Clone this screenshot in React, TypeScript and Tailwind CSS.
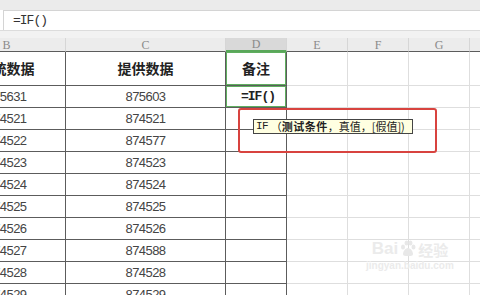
import React from 'react';

const colB = ['875631', '874521', '874522', '874523', '874524', '874525', '874526', '874527', '874528', '874529'];
const colC = ['875603', '874521', '874577', '874523', '874524', '874525', '874526', '874588', '874528', '874529'];

const dark = 'border-r border-b border-[#5c5c5c]';
const light = 'border-r border-b border-[#dedede]';
const num = "flex items-center justify-center text-[13px] tracking-[-0.6px] text-[#444] font-['Liberation_Sans',sans-serif]";
const cjk = "font-['Noto_Sans_CJK_SC','Noto_Sans',sans-serif]";

const App: React.FC = () => {
  const letters = ['B', 'C', 'D', 'E', 'F', 'G', ''];

  return (
    <div className="relative w-[480px] h-[295px] overflow-hidden bg-white">
      {/* toolbar strip */}
      <div className="h-[10px] bg-[#ebebeb]" />

      {/* formula bar */}
      <div className="h-[20px] ml-[3px] flex items-center bg-white border-t border-l border-[#d4d4d4] pl-[9px]">
        <span className="text-[13px] text-[#333] font-['Liberation_Mono',monospace] tracking-[-1px]">=IF()</span>
      </div>
      <div className="h-[8px] bg-[#f2f2f2] border-t border-[#dcdcdc]" />

      {/* sheet */}
      <div className="ml-[-52px] grid grid-cols-[118px_160px_61px_61px_61px_61px_100px]">
        {/* column letters */}
        {letters.map((l) => (
          <div
            key={l || 'h'}
            className={`h-[14px] flex items-center justify-center text-[12px] text-[#8a8a8a] font-['Liberation_Serif',serif] border-r border-[#d6d6d6] ${
              l === 'D' ? 'bg-[#d9d9d9] border-b-2 border-b-[#5aa75a] text-[#6a9f6a]' : 'bg-[#ececec] border-b border-b-[#5c5c5c]'
            }`}
          >
            {l}
          </div>
        ))}

        {/* header row */}
        <div className={`h-[34px] ${dark} flex items-center justify-center text-[14px] font-bold text-[#222] ${cjk}`}>系统数据</div>
        <div className={`h-[34px] ${dark} flex items-center justify-center text-[14px] font-bold text-[#222] ${cjk}`}>提供数据</div>
        <div className={`h-[34px] ${dark} shadow-[inset_0_0_0_1px_#5fae5f] flex items-center justify-center text-[14px] font-bold text-[#222] ${cjk}`}>备注</div>
        <div className={`h-[34px] ${light}`} />
        <div className={`h-[34px] ${light}`} />
        <div className={`h-[34px] ${light}`} />
        <div className={`h-[34px] ${light}`} />

        {colB.map((b, i) => (
          <React.Fragment key={i}>
            <div className={`h-[22px] ${dark} ${num}`}>{b}</div>
            <div className={`h-[22px] ${dark} ${num}`}>{colC[i]}</div>
            <div
              className={`h-[22px] ${dark} flex items-center justify-center pl-[4px] ${
                i === 0 ? 'shadow-[inset_0_0_0_1px_#5fae5f]' : ''
              }`}
            >
              {i === 0 && (
                <span className="text-[13px] font-bold text-[#222] font-['Liberation_Mono',monospace] tracking-[-1px]">=IF()</span>
              )}
            </div>
            <div className={`h-[22px] ${light}`} />
            <div className={`h-[22px] ${light}`} />
            <div className={`h-[22px] ${light}`} />
            <div className={`h-[22px] ${light}`} />
          </React.Fragment>
        ))}
      </div>

      {/* function hint tooltip */}
      <div
        className={`absolute left-[253px] top-[119px] h-[15px] w-[160px] bg-[#ffffe1] border border-[#444] flex items-center pl-[2px] text-[11px] leading-none text-[#222] whitespace-nowrap ${cjk}`}
      >
        <span className="font-['Liberation_Mono',monospace] tracking-[-0.5px]">IF</span>
        <span>&nbsp;（</span>
        <span className="font-bold tracking-[0.5px]">测试条件</span>
        <span>，真值，[假值])</span>
      </div>

      {/* red highlight box */}
      <div className="absolute left-[238px] top-[108px] w-[199px] h-[45px] border-[2.5px] border-[#d8433f] rounded-[3px]" />

      {/* watermark */}
      <div className="absolute left-[366px] top-[240px] flex flex-col items-center text-[#ebebeb] font-['Liberation_Sans',sans-serif]">
        <div className="flex items-end gap-[2px] text-[17px] font-bold leading-none">
          <span>Bai</span>
          <svg width="16" height="17" viewBox="0 0 16 17" fill="#e8e8e8">
            <ellipse cx="3" cy="7" rx="2" ry="2.5" />
            <ellipse cx="6.5" cy="3" rx="2" ry="2.5" />
            <ellipse cx="10.5" cy="3" rx="2" ry="2.5" />
            <ellipse cx="13.5" cy="7" rx="2" ry="2.5" />
            <path d="M8 8c3 0 5 4 5 6s-2 2-5 2-5 0-5-2 2-6 5-6z" />
          </svg>
          <span className={`${cjk} text-[15px]`}>经验</span>
        </div>
        <div className="text-[10px] leading-none mt-[4px] font-bold">jingyan.baidu.com</div>
      </div>
    </div>
  );
};

export default App;
